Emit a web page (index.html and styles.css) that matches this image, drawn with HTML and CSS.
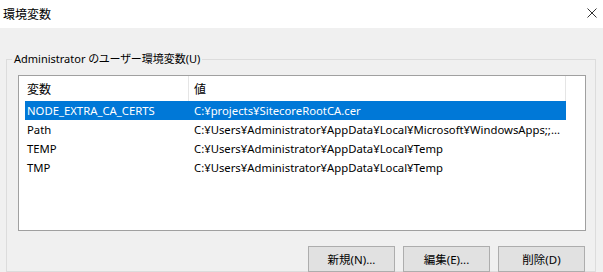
FILE: index.html
```html
<!DOCTYPE html>
<html lang="ja">

<head>
    <meta charset="UTF-8">
    <title>環境変数</title>
    <link rel="stylesheet" href="styles.css">
</head>

<body>
    <div class="window">
        <div class="titlebar">
            <span class="title">環境変数</span>
            <svg class="close" width="10" height="10" viewBox="0 0 10 10">
                <path d="M0.5 0.5 L9.5 9.5 M9.5 0.5 L0.5 9.5" stroke="#333" stroke-width="1" fill="none" />
            </svg>
        </div>

        <fieldset class="group">
            <legend>Administrator のユーザー環境変数(U)</legend>
            <div class="group-body">
                <div class="list">
                    <div class="list-header">
                        <div class="col col-name">変数</div>
                        <div class="col col-value">値</div>
                    </div>
                    <div class="row selected">
                        <div class="col col-name">NODE_EXTRA_CA_CERTS</div>
                        <div class="col col-value">C:¥projects¥SitecoreRootCA.cer</div>
                    </div>
                    <div class="row">
                        <div class="col col-name">Path</div>
                        <div class="col col-value">C:¥Users¥Administrator¥AppData¥Local¥Microsoft¥WindowsApps;;...</div>
                    </div>
                    <div class="row">
                        <div class="col col-name">TEMP</div>
                        <div class="col col-value">C:¥Users¥Administrator¥AppData¥Local¥Temp</div>
                    </div>
                    <div class="row">
                        <div class="col col-name">TMP</div>
                        <div class="col col-value">C:¥Users¥Administrator¥AppData¥Local¥Temp</div>
                    </div>
                </div>
                <div class="buttons">
                    <button>新規(N)...</button>
                    <button>編集(E)...</button>
                    <button>削除(D)</button>
                </div>
            </div>
        </fieldset>
    </div>
</body>

</html>
```

FILE: styles.css
```css
* {
    box-sizing: border-box;
    margin: 0;
    padding: 0;
}

body {
    width: 603px;
    height: 272px;
    overflow: hidden;
    background: #f0f0f0;
    font-family: "Noto Sans", "Noto Sans CJK JP", sans-serif;
    font-size: 11.3px;
    color: #000;
    font-feature-settings: "palt";
}

.titlebar {
    height: 28px;
    background: #fff;
    display: flex;
    align-items: center;
    justify-content: space-between;
    padding: 0 6px 2px 3px;
}

.title {
    font-family: "Noto Sans CJK JP", sans-serif;
    font-size: 12px;
}

.group {
    margin: 23px 7px 0 6px;
    border: 1px solid #dcdcdc;
    padding: 0;
    height: 221px;
}

.group legend {
    margin-left: 5px;
    padding: 0 2px;
    line-height: 16px;
    font-size: 11px;
}

.group-body {
    padding: 8px 9px 0 11px;
}

.list {
    height: 156px;
    background: #fff;
    border: 1px solid #a0a0a0;
}

.list-header,
.row {
    display: flex;
    width: 541px;
    margin-left: 6px;
}

.list-header {
    height: 25px;
}

.list-header .col {
    line-height: 23px;
    padding-top: 2px;
    border-right: 1px solid #e5e5e5;
    font-size: 12px;
}

.row {
    height: 19px;
    line-height: 19px;
}

.row.selected {
    background: #0078d7;
    color: #fff;
}

.col {
    white-space: nowrap;
    overflow: hidden;
}

.col-name {
    width: 164px;
    padding-left: 2px;
}

.col-value {
    flex: 1;
    padding-left: 5px;
}

.buttons {
    display: flex;
    justify-content: flex-end;
    gap: 8px;
    margin-top: 15px;
    padding-right: 1px;
}

.buttons button {
    width: 87px;
    height: 26px;
    background: #e1e1e1;
    border: 1px solid #adadad;
    font-family: inherit;
    font-size: 11.5px;
    color: #000;
}
```
